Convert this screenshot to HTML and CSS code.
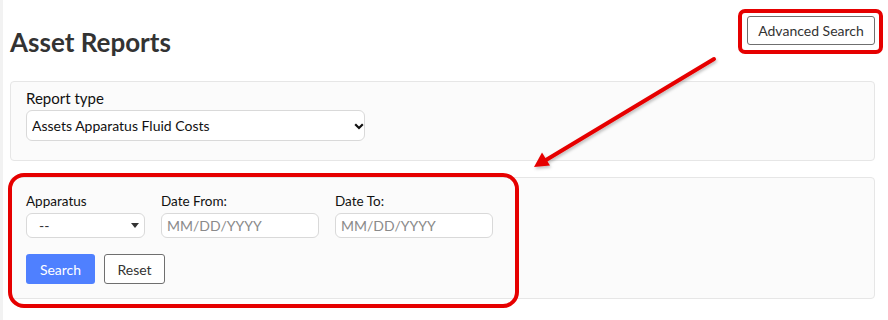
FILE: index.html
```html
<!DOCTYPE html>
<html lang="en">
<head>
  <meta charset="UTF-8">
  <title>Asset Reports</title>
  <link rel="stylesheet" href="styles.css">
</head>
<body>
  <div id="page">
    <div class="header">
      <h1>Asset Reports</h1>
      <button class="btn btn-outline">Advanced Search</button>
    </div>

    <div class="card card-type">
      <label class="type-label">Report type</label>
      <div class="select-wrap type-select">
        <select>
          <option>Assets Apparatus Fluid Costs</option>
        </select>
        <svg class="chevron" width="10" height="7" viewBox="0 0 10 7">
          <path d="M1.2 1.3 L5 5 L8.8 1.3" fill="none" stroke="#111" stroke-width="2.2"/>
        </svg>
      </div>
    </div>

    <div class="card card-search">
      <div class="fields">
        <div class="field">
          <label>Apparatus</label>
          <div class="select-wrap apparatus">
            <select>
              <option>--</option>
            </select>
            <svg class="caret" width="8" height="5" viewBox="0 0 8 5">
              <path d="M0 0 H8 L4 5 Z" fill="#333"/>
            </svg>
          </div>
        </div>
        <div class="field">
          <label>Date From:</label>
          <input type="text" placeholder="MM/DD/YYYY">
        </div>
        <div class="field">
          <label>Date To:</label>
          <input type="text" placeholder="MM/DD/YYYY">
        </div>
      </div>
      <div class="actions">
        <button class="btn btn-primary">Search</button>
        <button class="btn btn-outline btn-reset">Reset</button>
      </div>
    </div>
  </div>

  <!-- annotations -->
  <div class="mark mark-adv"></div>
  <div class="mark mark-form"></div>
  <svg class="arrow" width="888" height="320" viewBox="0 0 888 320">
    <defs>
      <filter id="shadow" x="-10%" y="-10%" width="130%" height="130%">
        <feDropShadow dx="1" dy="2" stdDeviation="1.5" flood-color="#000" flood-opacity="0.25"/>
      </filter>
    </defs>
    <g filter="url(#shadow)">
      <line x1="714" y1="59" x2="546" y2="160" stroke="#e60000" stroke-width="4" stroke-linecap="round"/>
      <polygon points="534,167 550,165.5 542,152.5" fill="#e60000"/>
    </g>
  </svg>
</body>
</html>
```

FILE: styles.css
```css
html, body {
  margin: 0;
  padding: 0;
  background: white;
  color: #333;
  font-family: Lato, "Liberation Sans", sans-serif;
}

body {
  border-left: 3px solid #f2f2f2;
  height: 320px;
  box-sizing: border-box;
  overflow: hidden;
}

#page {
  padding: 0 13px 0 7px;
}

.header {
  height: 81px;
  box-sizing: border-box;
  padding-top: 16px;
  display: flex;
  justify-content: space-between;
  align-items: flex-start;
}

h1 {
  margin: 11px 0 0 0;
  font-size: 26px;
  line-height: 30px;
  font-weight: bold;
  color: #333;
}

.btn {
  font-family: Lato, "Liberation Sans", sans-serif;
  font-size: 14px;
  height: 30px;
  padding: 0 14px;
  border-radius: 3px;
  cursor: pointer;
}

.btn-outline {
  background: white;
  color: #333;
  border: 1px solid #6f6f6f;
}

.header .btn-outline {
  height: 29px;
  width: 128px;
  padding: 0;
}

.btn-primary {
  background: #4f80ff;
  color: white;
  border: none;
  width: 69px;
  padding: 0;
}

.btn-reset {
  width: 61px;
  padding: 0;
}

.card {
  background: #fbfbfb;
  border: 1px solid #e6e6e6;
  border-radius: 4px;
}

.card-type {
  padding: 7px 15px 19px;
}

.type-label {
  display: block;
  font-size: 15px;
  line-height: 18px;
  color: #111;
  margin-bottom: 3px;
}

.select-wrap {
  position: relative;
}

select, input {
  font-family: Lato, "Liberation Sans", sans-serif;
  font-size: 14px;
  border: 1px solid #d9d9d9;
  border-radius: 6px;
  background: white;
  color: #111;
  box-sizing: border-box;
  outline: none;
  appearance: none;
  -webkit-appearance: none;
  margin: 0;
}

.type-select select {
  width: 339px;
  height: 31px;
  padding: 0 5px;
}

.chevron {
  position: absolute;
  left: 328px;
  top: 13px;
  pointer-events: none;
}

.card-search {
  margin-top: 16px;
  padding: 15px 15px 14px;
}

.fields {
  display: flex;
  gap: 16px;
}

.field label {
  display: block;
  font-size: 13.5px;
  line-height: 16px;
  color: #111;
  margin-bottom: 4px;
}

.apparatus select {
  width: 119px;
  height: 25px;
  padding: 0 12px;
  color: #333;
}

.caret {
  position: absolute;
  left: 105px;
  top: 10px;
  pointer-events: none;
}

input {
  width: 158px;
  height: 25px;
  padding: 0 5px;
}

input::placeholder {
  color: #8a8a8a;
}

.actions {
  display: flex;
  gap: 9px;
  margin-top: 16px;
}

.mark {
  position: absolute;
  border: 4px solid #e60000;
  box-sizing: border-box;
}

.mark-adv {
  left: 738px;
  top: 9px;
  width: 145px;
  height: 45px;
  border-radius: 7px;
}

.mark-form {
  left: 8px;
  top: 173px;
  width: 511px;
  height: 135px;
  border-radius: 16px;
}

.arrow {
  position: absolute;
  left: 0;
  top: 0;
  pointer-events: none;
}
```
